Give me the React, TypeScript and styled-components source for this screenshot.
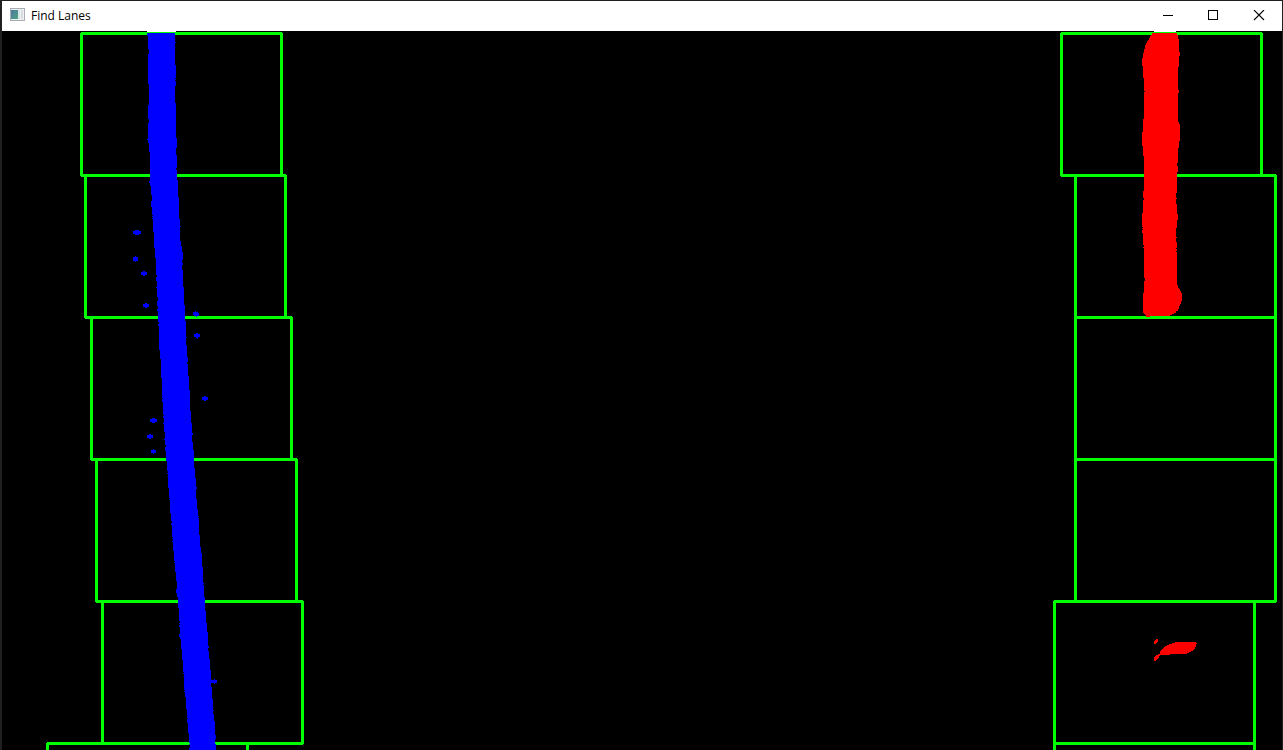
import React from 'react';
import styled, { createGlobalStyle } from 'styled-components';

const GlobalStyle = createGlobalStyle`
  * { box-sizing: border-box; }
  body { margin: 0; background: #202020; overflow: hidden; }
`;

const Window = styled.main`
  display: flex;
  flex-direction: column;
  height: 100vh;
  padding: 1px 1px 0 2px;
  background: #202020;
  overflow: hidden;
`;

const TitleBar = styled.header`
  display: flex;
  flex: none;
  align-items: center;
  height: 30px;
  padding-left: 8px;
  background: #fff;
`;

const AppIcon = styled.svg`
  display: block;
  flex: none;
  margin-right: 5px;
`;

const Title = styled.h1`
  flex: 1;
  margin: 0;
  color: #000;
  font: 400 12px/16px "Segoe UI", "Open Sans", sans-serif;
`;

const ControlButton = styled.button<{ $danger?: boolean }>`
  display: flex;
  align-items: center;
  justify-content: center;
  width: 46px;
  height: 30px;
  padding: 0;
  border: 0;
  background: transparent;
  color: #000;
  &:hover { background: ${(p) => (p.$danger ? '#e81123' : '#e5e5e5')}; }
`;

const Viewport = styled.section`
  flex: 1;
  min-height: 0;
  background: #000;
  overflow: hidden;
`;

const Frame = styled.svg`
  display: block;
  width: 100%;
  height: auto;
`;

// Runs along one side of a lane mask: [row where the run ends, x].
type Run = [number, number];

const edge = (start: number, runs: Run[]) => {
  let y = start;
  return runs.map(([end, x]) => {
    const run = [[x, y], [x, end]];
    y = end;
    return run;
  }).flat();
};

const outline = (start: number, left: Run[], right: Run[]) =>
  [...edge(start, left), ...edge(start, right).reverse()].map((p) => p.join(',')).join(' ');

const blueLeft: Run[] = [
  [36, 147], [49, 148], [54, 149], [84, 148], [105, 149], [119, 148], [123, 149], [139, 148], [140, 147],
  [143, 148], [152, 149], [181, 150], [183, 149], [186, 150], [195, 151], [201, 152], [207, 151],
  [215, 152], [216, 153], [217, 152], [218, 153], [219, 152], [232, 153], [248, 154], [258, 155],
  [275, 156], [277, 157], [281, 156], [287, 157], [288, 156], [297, 157], [301, 158], [306, 157],
  [309, 158], [311, 157], [322, 158], [324, 159], [326, 158], [350, 159], [359, 160], [378, 161],
  [398, 162], [399, 163], [402, 162], [415, 163], [416, 164], [418, 163], [423, 164], [424, 163],
  [432, 164], [439, 165], [440, 164], [445, 165], [447, 166], [451, 165], [461, 166], [471, 167],
  [473, 168], [474, 167], [488, 168], [498, 169], [499, 170], [500, 169], [513, 170], [521, 171],
  [523, 172], [525, 171], [537, 172], [538, 173], [539, 172], [541, 173], [542, 172], [551, 173],
  [561, 174], [562, 175], [563, 174], [572, 175], [581, 176], [589, 177], [593, 176], [597, 177],
  [608, 178], [621, 179], [623, 180], [624, 179], [625, 180], [627, 179], [634, 180], [637, 179],
  [639, 180], [649, 181], [660, 182], [672, 183], [673, 184], [674, 183], [690, 184], [691, 185],
  [692, 184], [697, 185], [709, 186], [718, 187], [719, 188], [723, 187], [733, 188], [743, 189],
  [744, 190], [745, 189], [748, 190], [751, 189],
];

const blueRight: Run[] = [
  [42, 175], [43, 176], [65, 175], [78, 176], [79, 175], [80, 176], [81, 175], [86, 176], [103, 175],
  [138, 176], [148, 177], [155, 176], [168, 177], [170, 176], [180, 177], [197, 178], [219, 179],
  [226, 180], [227, 181], [241, 180], [246, 181], [252, 182], [260, 183], [263, 182], [265, 183],
  [270, 182], [287, 183], [305, 184], [321, 185], [337, 186], [338, 187], [345, 186], [357, 187],
  [362, 188], [364, 187], [376, 188], [390, 189], [411, 190], [423, 191], [433, 192], [435, 193],
  [442, 192], [450, 193], [468, 194], [478, 195], [487, 196], [489, 197], [499, 196], [509, 197],
  [516, 198], [517, 199], [518, 198], [535, 199], [547, 200], [553, 201], [567, 202], [583, 203],
  [584, 204], [585, 203], [597, 204], [611, 205], [623, 206], [632, 207], [646, 208], [648, 209],
  [651, 208], [659, 209], [670, 210], [687, 211], [699, 212], [710, 213], [711, 214], [714, 213],
  [721, 214], [735, 215], [739, 216], [744, 215], [751, 216],
];

const redLeft: Run[] = [
  [35, 1152], [36, 1151], [38, 1150], [40, 1149], [41, 1148], [43, 1147], [45, 1146], [49, 1145],
  [53, 1144], [58, 1143], [66, 1142], [78, 1143], [91, 1144], [92, 1145], [119, 1144], [132, 1143], [146, 1142],
  [156, 1143], [191, 1144], [198, 1143], [200, 1144], [213, 1143], [227, 1142], [228, 1143],
  [229, 1142], [230, 1143], [233, 1142], [245, 1143], [247, 1144], [248, 1143], [278, 1144],
  [281, 1145], [293, 1144], [313, 1143], [314, 1144], [315, 1145], [316, 1146],
];

const redRight: Run[] = [
  [35, 1177], [39, 1178], [52, 1179], [56, 1180], [67, 1179], [90, 1178], [93, 1179], [122, 1178],
  [124, 1179], [141, 1180], [148, 1179], [163, 1178], [166, 1177], [172, 1178], [193, 1177],
  [198, 1176], [199, 1177], [204, 1176], [214, 1177], [220, 1178], [228, 1177], [237, 1176],
  [238, 1177], [242, 1176], [248, 1177], [249, 1176], [251, 1177], [252, 1176], [285, 1177],
  [288, 1178], [289, 1179], [291, 1180], [293, 1181], [301, 1182], [304, 1181], [306, 1180],
  [309, 1179], [311, 1178], [313, 1176], [314, 1174], [315, 1172], [316, 1170],
];

const fragments: { start: number; left: Run[]; right: Run[] }[] = [
  {
    start: 639,
    left: [[640, 1156], [641, 1155], [644, 1154]],
    right: [[642, 1158], [643, 1157], [644, 1156]],
  },
  {
    start: 642,
    left: [[643, 1175], [644, 1172], [645, 1169], [646, 1167], [647, 1165], [648, 1164], [649, 1163],
      [650, 1162], [651, 1161], [654, 1160], [655, 1158], [656, 1156], [657, 1155], [661, 1154]],
    right: [[643, 1196], [644, 1197], [647, 1196], [649, 1195], [650, 1194], [651, 1193], [652, 1191],
      [653, 1189], [654, 1187], [655, 1170], [656, 1160], [658, 1159], [659, 1158], [660, 1157], [661, 1156]],
  },
];

// Stray pixels: x, y, width, height.
const specks = [
  [133, 231, 8, 3], [135, 230, 4, 5],
  [133, 257, 5, 4], [135, 256, 1, 6],
  [141, 272, 6, 3], [143, 271, 2, 5],
  [143, 304, 6, 3], [145, 303, 2, 5],
  [193, 312, 5, 3], [194, 313, 5, 3], [195, 311, 1, 1], [196, 316, 1, 1],
  [194, 334, 6, 3], [196, 333, 2, 5], [197, 338, 1, 1],
  [202, 397, 6, 3], [204, 396, 2, 5],
  [150, 419, 7, 3], [152, 418, 3, 5],
  [147, 435, 6, 3], [149, 434, 2, 5],
  [151, 450, 5, 3], [153, 449, 1, 5],
  [211, 680, 6, 3], [214, 679, 1, 5],
];

const leftWindows = [81, 85, 91, 96, 102, 47];
const rightWindows = [1061, 1075, 1075, 1075, 1054, 1054];

const SearchWindows = ({ columns }: { columns: number[] }) => (
  <g fill="none" stroke="#00ff00" strokeWidth={3}>
    {columns.map((x, i) => (
      <rect key={i} x={x + 0.5} y={33.5 + i * 142} width={200} height={142} rx={1} />
    ))}
  </g>
);

export default function App() {
  return (
    <>
      <GlobalStyle />
      <Window>
        <TitleBar>
          <AppIcon width="16" height="16" viewBox="0 0 16 16" aria-hidden="true" shapeRendering="crispEdges">
            <defs>
              <linearGradient id="pane" x1="0" y1="0" x2="1" y2="1">
                <stop offset="0" stopColor="#4a78a0" />
                <stop offset="1" stopColor="#4fa482" />
              </linearGradient>
            </defs>
            <rect x="0" y="0" width="15" height="13" fill="#a9adb1" />
            <rect x="1" y="1" width="13" height="11" fill="#eef1f2" />
            <rect x="1" y="2" width="7" height="9" fill="url(#pane)" />
            <rect x="8" y="2" width="2" height="9" fill="#d6e6ea" />
            <rect x="11" y="2" width="2" height="9" fill="#dadddf" />
          </AppIcon>
          <Title>Find Lanes</Title>
          <ControlButton type="button" aria-label="Minimize">
            <svg width="12" height="12" viewBox="0 0 12 12" shapeRendering="crispEdges">
              <path d="M2 5h10v1H2z" fill="currentColor" />
            </svg>
          </ControlButton>
          <ControlButton type="button" aria-label="Maximize">
            <svg width="12" height="12" viewBox="0 0 12 12" shapeRendering="crispEdges">
              <rect x="1.5" y="0.5" width="9" height="9" fill="none" stroke="currentColor" />
            </svg>
          </ControlButton>
          <ControlButton type="button" aria-label="Close" $danger>
            <svg width="12" height="12" viewBox="0 0 12 12">
              <path d="M1 0l10 10M11 0L1 10" fill="none" stroke="currentColor" strokeWidth="1.1" />
            </svg>
          </ControlButton>
        </TitleBar>
        <Viewport>
          <Frame viewBox="2 31 1280 720" shapeRendering="crispEdges" role="img" aria-label="Detected lane pixels with search windows">
            <rect x="2" y="31" width="1280" height="720" fill="#000" />
            <SearchWindows columns={leftWindows} />
            <SearchWindows columns={rightWindows} />
            <path d="M147 31h29v1h-29zM1154 31h22v1h-22z" fill="#fff" />
            <g fill="#0000ff">
              <polygon points={outline(33, blueLeft, blueRight)} />
              {specks.map(([x, y, w, h]) => (
                <rect key={`${x}-${y}`} x={x} y={y} width={w} height={h} />
              ))}
            </g>
            <g fill="#ff0000">
              <polygon points={outline(33, redLeft, redRight)} />
              <rect x="1146" y="316" width="4" height="1" />
              {fragments.map((f) => (
                <polygon key={f.start} points={outline(f.start, f.left, f.right)} />
              ))}
            </g>
          </Frame>
        </Viewport>
      </Window>
    </>
  );
}
